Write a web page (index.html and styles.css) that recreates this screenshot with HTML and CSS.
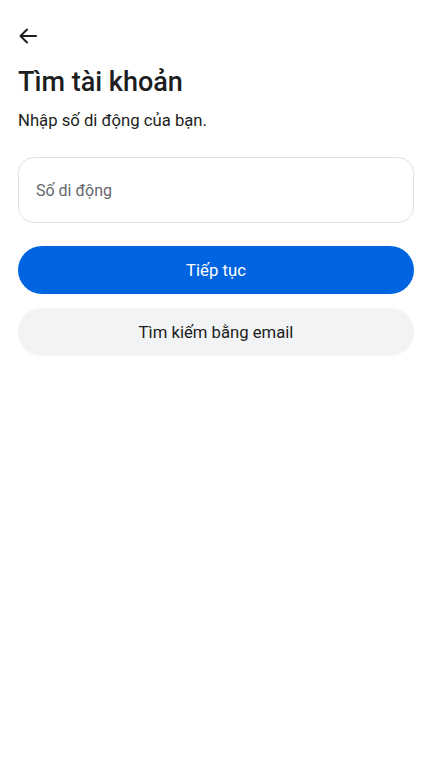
FILE: index.html
```html
<!DOCTYPE html>
<html lang="vi">
<head>
    <meta charset="UTF-8">
    <meta name="viewport" content="width=device-width, initial-scale=1.0">
    <title>Tìm tài khoản</title>
    <link rel="stylesheet" href="styles.css">
</head>
<body>

    <div class="page">
        <button class="back-btn" aria-label="Quay lại">
            <svg width="20" height="20" viewBox="0 0 20 20" fill="none" stroke="#1c1e21" stroke-width="2" stroke-linecap="round" stroke-linejoin="round">
                <path d="M18 10H3"/>
                <path d="M9 3.5L2.5 10L9 16.5"/>
            </svg>
        </button>

        <h1 class="title">Tìm tài khoản</h1>
        <p class="subtitle">Nhập số di động của bạn.</p>

        <div class="field">
            <input type="tel" placeholder="Số di động">
        </div>

        <button class="btn btn-primary">Tiếp tục</button>
        <button class="btn btn-secondary">Tìm kiếm bằng email</button>
    </div>

</body>
</html>
```

FILE: styles.css
```css
:root {
    --primary-color: #0064e0;
    --text-color: #1c1e21;
    --muted-color: #65676b;
    --border-color: #dde0e4;
    --light-bg: #f1f3f5;
}

* {
    margin: 0;
    padding: 0;
    box-sizing: border-box;
}

body {
    font-family: Roboto, 'Liberation Sans', sans-serif;
    background-color: #ffffff;
    color: var(--text-color);
}

.page {
    padding: 24px 18px;
    display: flex;
    flex-direction: column;
}

/* Back arrow */
.back-btn {
    width: 24px;
    height: 24px;
    border: none;
    background: none;
    display: flex;
    align-items: center;
    justify-content: flex-start;
    cursor: pointer;
}

/* Heading */
.title {
    margin-top: 18px;
    font-size: 27px;
    font-weight: 500;
    line-height: 32px;
}

.subtitle {
    margin-top: 13px;
    font-size: 16.7px;
    line-height: 20px;
}

/* Phone input */
.field {
    margin-top: 26px;
    height: 66px;
    border: 1px solid var(--border-color);
    border-radius: 16px;
    display: flex;
    align-items: center;
    padding: 0 17px;
}

.field input {
    width: 100%;
    border: none;
    outline: none;
    font-family: inherit;
    font-size: 16px;
    color: var(--text-color);
    background: transparent;
}

.field input::placeholder {
    color: var(--muted-color);
}

/* Buttons */
.btn {
    height: 48px;
    border: none;
    border-radius: 24px;
    font-family: inherit;
    font-size: 16.7px;
    cursor: pointer;
}

.btn-primary {
    margin-top: 23px;
    background: var(--primary-color);
    color: #ffffff;
}

.btn-secondary {
    margin-top: 14px;
    background: var(--light-bg);
    color: var(--text-color);
}
```
